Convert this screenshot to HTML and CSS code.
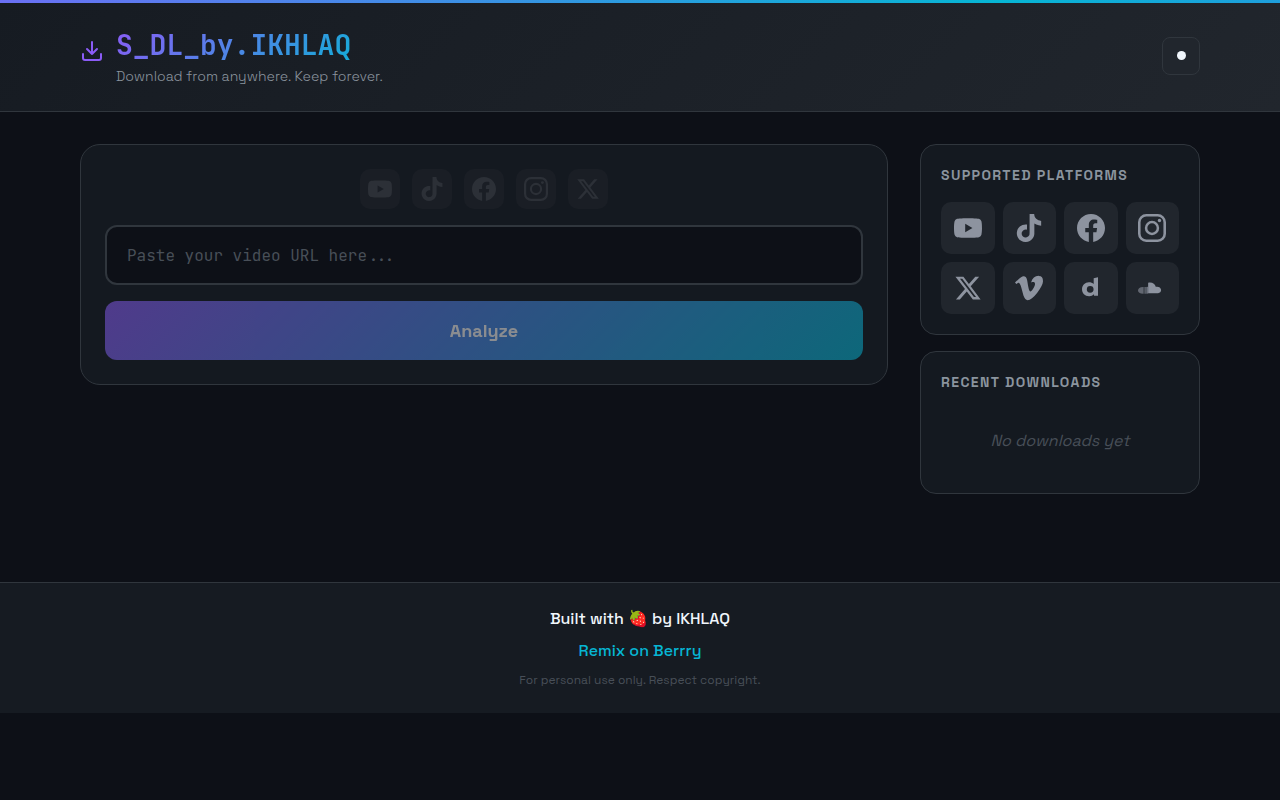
FILE: index.html
```html
<!DOCTYPE html>
<html lang="en">
<head>
  <meta charset="UTF-8" />
  <title>S_DL_by.IKHLAQ</title>
  <meta name="viewport" content="width=device-width, initial-scale=1.0" />
  <link rel="stylesheet" href="styles.css">
</head>
<body>
  <!-- shared icon shapes -->
  <svg class="sprite" aria-hidden="true">
    <symbol id="i-youtube" viewBox="0 0 24 24"><path d="M23.5 6.2a3 3 0 0 0-2.1-2.1C19.5 3.6 12 3.6 12 3.6s-7.500 0-9.400.5A3 3 0 0 0 .5 6.200C0 8.100 0 12 0 12s0 3.900.5 5.800a3 3 0 0 0 2.100 2.100c1.900.5 9.400.5 9.400.5s7.500 0 9.400-.5a3 3 0 0 0 2.100-2.100c.5-1.900.5-5.800.5-5.800s0-3.900-.5-5.800zM9.600 15.600V8.400l6.200 3.600z"/></symbol>
    <symbol id="i-tiktok" viewBox="0 0 24 24"><path d="M12.525.02c1.310-.02 2.610-.01 3.910-.02.080 1.530.630 3.090 1.750 4.170 1.120 1.110 2.700 1.620 4.240 1.790v4.030c-1.440-.05-2.890-.35-4.200-.97-.570-.26-1.100-.59-1.620-.93-.010 2.920.010 5.840-.020 8.750-.080 1.400-.540 2.790-1.350 3.940-1.310 1.920-3.580 3.170-5.910 3.210-1.430.08-2.860-.31-4.080-1.030-2.020-1.190-3.440-3.370-3.650-5.710-.020-.5-.030-1-.010-1.490.180-1.900 1.120-3.720 2.580-4.960 1.660-1.440 3.980-2.130 6.150-1.720.020 1.480-.040 2.960-.040 4.440-.990-.32-2.150-.23-3.020.37-.630.41-1.110 1.040-1.360 1.750-.210.51-.150 1.070-.140 1.610.240 1.640 1.820 3.020 3.500 2.870 1.120-.01 2.190-.66 2.770-1.610.190-.33.400-.67.410-1.060.100-1.790.060-3.570.070-5.360.010-4.030-.010-8.050.020-12.070z"/></symbol>
    <symbol id="i-facebook" viewBox="0 0 24 24"><path d="M24 12.073C24 5.446 18.627.073 12 .073S0 5.446 0 12.073c0 5.990 4.388 10.954 10.125 11.854v-8.385H7.078v-3.470h3.047V9.430c0-3.007 1.792-4.669 4.533-4.669 1.312 0 2.686.235 2.686.235v2.953H15.830c-1.491 0-1.956.925-1.956 1.874v2.250h3.328l-.532 3.470h-2.796v8.385C19.612 23.027 24 18.062 24 12.073z"/></symbol>
    <symbol id="i-instagram" viewBox="0 0 24 24"><rect x="1.100" y="1.100" width="21.800" height="21.800" rx="6" fill="none" stroke="currentColor" stroke-width="2.200"/><circle cx="12" cy="12" r="5.080" fill="none" stroke="currentColor" stroke-width="2.160"/><circle cx="18.406" cy="5.595" r="1.440"/></symbol>
    <symbol id="i-x" viewBox="0 0 24 24"><path d="M18.244 2.250h3.308l-7.227 8.260 8.502 11.240H16.170l-5.214-6.817L4.990 21.750H1.680l7.730-8.835L1.254 2.250H8.080l4.713 6.231zm-1.161 17.520h1.833L7.084 4.126H5.117z"/></symbol>
    <symbol id="i-vimeo" viewBox="0 0 24 24"><path d="M23.977 6.416c-.105 2.338-1.739 5.543-4.894 9.609-3.268 4.247-6.026 6.370-8.290 6.370-1.409 0-2.578-1.294-3.553-3.881L5.322 11.400C4.603 8.816 3.834 7.522 3.010 7.522c-.179 0-.806.378-1.881 1.132L0 7.197c1.185-1.044 2.351-2.084 3.501-3.128C5.080 2.701 6.266 1.984 7.055 1.910c1.867-.180 3.016 1.100 3.447 3.838.465 2.953.789 4.789.971 5.507.539 2.450 1.131 3.674 1.776 3.674.502 0 1.256-.796 2.265-2.385 1.004-1.589 1.540-2.797 1.612-3.628.144-1.371-.395-2.061-1.614-2.061-.574 0-1.167.121-1.777.391 1.186-3.868 3.434-5.757 6.762-5.637 2.473.060 3.628 1.664 3.480 4.807z"/></symbol>
    <symbol id="i-dailymotion" viewBox="0 0 24 24"><path fill-rule="evenodd" d="M14.300 3.600 18 2.800V18.700H14.600V17.400A5.700 5.700 0 0 1 10.300 19C6.800 19 4.300 16.300 4.300 13 4.300 9.700 6.900 7 10.200 7c1.700 0 3.100.5 4.100 1.600zM11.300 10.200a2.900 2.900 0 1 0 0 5.800 2.900 2.900 0 0 0 0-5.800z"/></symbol>
    <symbol id="i-soundcloud" viewBox="0 0 24 24"><path d="M8.700 7.500c3.400-.7 5.900.9 6.500 3.500 2-.5 4.600.4 4.600 2.800 0 1.500-1.100 2.600-2.600 2.600H8.700z"/><path opacity=".7" d="M7.500 11h1.200v5.800H7.500z"/><path opacity=".5" d="M6 11.200h1.500V17H6z"/><path opacity=".35" d="M4.500 11.200H6V17H4.500z"/><path opacity=".6" d="M4.500 11.200V17C1.500 17 0 15.700 0 14.200c0-1.700 1.500-2.900 4.500-3z"/></symbol>
  </svg>

  <header class="header">
    <div class="header-content">
      <div class="brand">
        <svg class="logo" viewBox="0 0 24 24" fill="none" stroke="currentColor" stroke-width="2" stroke-linecap="round" stroke-linejoin="round" aria-hidden="true">
          <path d="M21 15v4a2 2 0 0 1-2 2H5a2 2 0 0 1-2-2v-4M7 10l5 5 5-5M12 15V3"/>
        </svg>
        <div>
          <h1>S_DL_by.IKHLAQ</h1>
          <p class="tagline">Download from anywhere. Keep forever.</p>
        </div>
      </div>
      <button type="button" class="theme-toggle" aria-label="Toggle theme"><span class="dot"></span></button>
    </div>
  </header>

  <main class="main">
    <section class="card download-card">
      <div class="hints">
        <span class="hint"><svg><use href="#i-youtube"/></svg></span>
        <span class="hint"><svg><use href="#i-tiktok"/></svg></span>
        <span class="hint"><svg><use href="#i-facebook"/></svg></span>
        <span class="hint"><svg><use href="#i-instagram"/></svg></span>
        <span class="hint"><svg><use href="#i-x"/></svg></span>
      </div>
      <form class="url-form" id="urlForm">
        <input type="url" id="urlInput" aria-label="Video URL" placeholder="Paste your video URL here..." />
        <button type="submit" class="analyze" disabled>Analyze</button>
      </form>
    </section>

    <aside class="sidebar">
      <section class="card side-card">
        <h2>Supported Platforms</h2>
        <div class="platforms">
          <span class="platform" title="YouTube"><svg><use href="#i-youtube"/></svg></span>
          <span class="platform" title="TikTok"><svg><use href="#i-tiktok"/></svg></span>
          <span class="platform" title="Facebook"><svg><use href="#i-facebook"/></svg></span>
          <span class="platform" title="Instagram"><svg><use href="#i-instagram"/></svg></span>
          <span class="platform" title="X"><svg><use href="#i-x"/></svg></span>
          <span class="platform" title="Vimeo"><svg><use href="#i-vimeo"/></svg></span>
          <span class="platform" title="Dailymotion"><svg><use href="#i-dailymotion"/></svg></span>
          <span class="platform" title="SoundCloud"><svg><use href="#i-soundcloud"/></svg></span>
        </div>
      </section>

      <section class="card side-card">
        <h2>Recent Downloads</h2>
        <p class="empty">No downloads yet</p>
      </section>
    </aside>
  </main>

  <footer class="footer">
    <p class="built">Built with 🍓 by IKHLAQ</p>
    <p><a href="#remix">Remix on Berrry</a></p>
    <p class="legal">For personal use only. Respect copyright.</p>
  </footer>

  <script>
    const urlInput = document.getElementById("urlInput");
    const analyze = document.querySelector(".analyze");

    urlInput.addEventListener("input", () => {
      analyze.disabled = !urlInput.value.trim();
    });

    document.getElementById("urlForm").addEventListener("submit", (e) => e.preventDefault());
  </script>
</body>
</html>
```
FILE: styles.css
```css
:root {
  --bg: #0d1017;
  --surface: #161b22;
  --card: #141920;
  --raised: #21262d;
  --border: #30363d;
  --text: #f0f6fc;
  --muted: #8b949e;
  --faint: #484f58;
  --purple: #8b5cf6;
  --cyan: #06b6d4;
  --sans: "Space Grotesk", Inter, "Noto Color Emoji", sans-serif;
  --mono: "JetBrains Mono", "DejaVu Sans Mono", monospace;
}

* {
  margin: 0;
  padding: 0;
  box-sizing: border-box;
}

body {
  font-family: var(--sans);
  font-size: 16px;
  line-height: 24px;
  color: var(--text);
  background: var(--bg);
}

body::before {
  content: "";
  position: absolute;
  top: 0;
  left: 0;
  right: 0;
  height: 3px;
  background: linear-gradient(90deg, #6b70f4, var(--cyan) 78%, #1f9fdd);
}

svg {
  display: block;
  fill: currentColor;
}

.sprite {
  display: none;
}

/* header */
.header {
  padding: 24px;
  background: linear-gradient(135deg, var(--surface), var(--raised));
  border-bottom: 1px solid var(--border);
}

.header-content {
  max-width: 1120px;
  margin: 0 auto;
  display: flex;
  align-items: center;
  justify-content: space-between;
}

.brand {
  display: flex;
  align-items: center;
  gap: 12px;
}

.logo {
  width: 24px;
  height: 24px;
  margin-bottom: 9px;
  fill: none;
  color: var(--purple);
}

h1 {
  font-family: var(--mono);
  font-size: 28px;
  line-height: 42px;
  font-weight: 700;
  color: transparent;
  background: linear-gradient(135deg, var(--purple), var(--cyan));
  background-clip: text;
  -webkit-background-clip: text;
}

.tagline {
  font-size: 14px;
  line-height: 21px;
  font-weight: 300;
  color: var(--muted);
}

.theme-toggle {
  width: 38px;
  height: 38px;
  display: flex;
  align-items: center;
  justify-content: center;
  background: var(--raised);
  border: 1px solid var(--border);
  border-radius: 8px;
  cursor: pointer;
}

.dot {
  width: 9px;
  height: 9px;
  border-radius: 50%;
  background: var(--text);
}

/* layout */
.main {
  max-width: 1168px;
  margin: 0 auto;
  padding: 32px 24px 88px;
  display: grid;
  grid-template-columns: 1fr 280px;
  gap: 32px;
  align-items: start;
}

.card {
  background: var(--card);
  border: 1px solid var(--border);
}

.download-card {
  padding: 24px;
  border-radius: 20px;
}

.hints {
  display: flex;
  justify-content: center;
  gap: 12px;
  margin-bottom: 16px;
}

.hint {
  width: 40px;
  height: 40px;
  display: flex;
  align-items: center;
  justify-content: center;
  border-radius: 10px;
  background: #1a1e25;
  color: #2c3037;
}

.hint svg {
  width: 24px;
  height: 24px;
}

.url-form {
  display: grid;
  gap: 16px;
}

.url-form input {
  width: 100%;
  height: 60px;
  padding: 0 20px;
  font-family: var(--mono);
  font-size: 16px;
  color: var(--text);
  background: var(--bg);
  border: 2px solid var(--border);
  border-radius: 12px;
  outline: none;
}

.url-form input::placeholder {
  color: var(--faint);
}

.url-form input:focus {
  border-color: var(--purple);
}

.analyze {
  height: 59px;
  font-family: var(--sans);
  font-size: 18px;
  font-weight: 600;
  color: #fff;
  background: linear-gradient(135deg, var(--purple), var(--cyan));
  border: none;
  border-radius: 12px;
  cursor: pointer;
}

.analyze:disabled {
  opacity: 0.5;
  cursor: not-allowed;
}

/* sidebar */
.sidebar {
  display: grid;
  gap: 16px;
}

.side-card {
  padding: 20px;
  border-radius: 16px;
}

h2 {
  margin-bottom: 16px;
  font-size: 14px;
  line-height: 21px;
  font-weight: 600;
  letter-spacing: 0.1em;
  text-transform: uppercase;
  color: var(--muted);
}

.platforms {
  display: grid;
  grid-template-columns: repeat(4, 1fr);
  gap: 8px;
}

.platform {
  height: 52px;
  display: flex;
  align-items: center;
  justify-content: center;
  border-radius: 10px;
  background: var(--raised);
  color: #8d939f;
}

.platform svg {
  width: 28px;
  height: 28px;
}

.empty {
  padding: 20px 0;
  font-style: italic;
  text-align: center;
  color: var(--faint);
}

/* footer */
.footer {
  padding: 24px;
  display: grid;
  gap: 8px;
  text-align: center;
  background: var(--surface);
  border-top: 1px solid var(--border);
}

.built,
.footer a {
  font-weight: 500;
}

.footer a {
  color: var(--cyan);
  text-decoration: none;
}

.legal {
  font-size: 12px;
  line-height: 18px;
  color: var(--faint);
}

@media (max-width: 900px) {
  .main {
    grid-template-columns: 1fr;
  }
}
```
